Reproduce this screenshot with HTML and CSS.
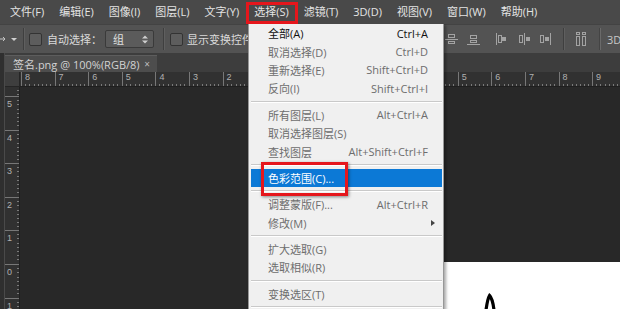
FILE: index.html
```html
<!DOCTYPE html>
<html>
<head>
<meta charset="utf-8">
<link rel="stylesheet" href="styles.css">
</head>
<body>
<div class="app">
  <div class="menubar">
    <span class="mi">文件(F)</span>
    <span class="mi">编辑(E)</span>
    <span class="mi">图像(I)</span>
    <span class="mi">图层(L)</span>
    <span class="mi">文字(Y)</span>
    <span class="mi active">选择(S)</span>
    <span class="mi">滤镜(T)</span>
    <span class="mi">3D(D)</span>
    <span class="mi">视图(V)</span>
    <span class="mi">窗口(W)</span>
    <span class="mi">帮助(H)</span>
  </div>

  <div class="toolbar">
    <div class="tb-left">
      <svg class="move" width="6" height="8" viewBox="0 0 6 8"><path d="M0 4H5M3 2L5 4L3 6" fill="none" stroke="#c4c4c4" stroke-width="1"/></svg>
      <span class="caret"></span>
      <span class="vsep"></span>
      <span class="cb"></span>
      <span class="lbl">自动选择：</span>
      <span class="select">组<svg class="updown" width="6" height="9" viewBox="0 0 6 9"><path d="M0 3.5L3 0.5L6 3.5ZM0 5.5L3 8.5L6 5.5Z" fill="#cfcfcf"/></svg></span>
      <span class="vsep sep2"></span>
      <span class="cb cb2"></span>
      <span class="lbl lbl2">显示变换控件</span>
    </div>
    <div class="tb-right">
      <svg class="ic i1" width="13" height="14" viewBox="0 0 13 14"><g fill="none" stroke="#a3a3a3"><rect x="3.5" y="2.5" width="6" height="3"/><path d="M0 7.5H13"/><rect x="3.5" y="9.5" width="6" height="2"/></g></svg>
      <svg class="ic i2" width="13" height="14" viewBox="0 0 13 14"><g fill="none" stroke="#a3a3a3"><rect x="3.5" y="3.5" width="6" height="3"/><rect x="3.5" y="8.5" width="6" height="2"/><path d="M0 12.5H13"/></g></svg>
      <svg class="ic i3" width="13" height="14" viewBox="0 0 13 14"><g fill="none" stroke="#a3a3a3"><path d="M1.5 1V13"/><rect x="3.5" y="3.5" width="3" height="7"/></g><rect x="7" y="5" width="4" height="4" fill="#a3a3a3"/></svg>
      <svg class="ic i4" width="13" height="14" viewBox="0 0 13 14"><g fill="none" stroke="#a3a3a3"><rect x="1.5" y="3.5" width="3" height="7"/><path d="M6.5 1V13"/></g><rect x="8" y="5" width="4" height="4" fill="#a3a3a3"/></svg>
      <svg class="ic i5" width="13" height="14" viewBox="0 0 13 14"><g fill="none" stroke="#a3a3a3"><rect x="1.5" y="3.5" width="3" height="7"/><path d="M11.5 1V13"/></g><rect x="6" y="5" width="4" height="4" fill="#a3a3a3"/></svg>
      <span class="vsep sep3"></span>
      <svg class="ic i6" width="14" height="14" viewBox="0 0 14 14"><g fill="none" stroke="#a3a3a3"><rect x="2.5" y="0.5" width="3" height="2"/><rect x="2.5" y="4.5" width="3" height="9"/><rect x="8.5" y="0.5" width="3" height="2"/><rect x="8.5" y="4.5" width="3" height="9"/></g></svg>
      <span class="vsep sep4"></span>
      <span class="lbl three">3D</span>
    </div>
  </div>

  <div class="main">
    <div class="strip"></div>
    <div class="doc">
      <div class="tabbar">
        <div class="tab"><span>签名.png @ 100%(RGB/8)</span><span class="close">×</span></div>
      </div>
      <div class="rulerrow">
        <div class="corner"></div>
        <div class="hruler">
          <span class="seg">8</span><span class="seg">7</span><span class="seg">6</span><span class="seg">5</span><span class="seg">4</span><span class="seg">3</span><span class="seg">2</span><span class="seg">1</span><span class="seg"></span><span class="seg"></span><span class="seg"></span><span class="seg"></span><span class="seg"></span><span class="seg">5</span><span class="seg">6</span><span class="seg">7</span><span class="seg">8</span><span class="seg">9</span>
        </div>
      </div>
      <div class="body">
        <div class="vruler">
          <span class="vseg first"></span>
          <span class="vseg">5</span><span class="vseg">4</span><span class="vseg">3</span><span class="vseg">2</span><span class="vseg">1</span><span class="vseg">0</span><span class="vseg">1</span>
        </div>
        <div class="canvas">
          <div class="image">
            <svg class="sig" width="60" height="50" viewBox="0 0 60 50"><path d="M43 48C44 41 45 36 46.5 33.5C48 35 50 40 51 48" fill="none" stroke="#000" stroke-width="3.2" stroke-linecap="round"/></svg>
          </div>
        </div>
      </div>
    </div>
  </div>

  <div class="dropdown">
    <div class="item strong"><span>全部(A)</span><span class="sc">Ctrl+A</span></div>
    <div class="item"><span>取消选择(D)</span><span class="sc">Ctrl+D</span></div>
    <div class="item"><span>重新选择(E)</span><span class="sc">Shift+Ctrl+D</span></div>
    <div class="item"><span>反向(I)</span><span class="sc">Shift+Ctrl+I</span></div>
    <div class="sep"></div>
    <div class="item"><span>所有图层(L)</span><span class="sc">Alt+Ctrl+A</span></div>
    <div class="item"><span>取消选择图层(S)</span></div>
    <div class="item"><span>查找图层</span><span class="sc">Alt+Shift+Ctrl+F</span></div>
    <div class="sep"></div>
    <div class="item hl"><span>色彩范围(C)...</span></div>
    <div class="sep"></div>
    <div class="item"><span>调整蒙版(F)...</span><span class="sc">Alt+Ctrl+R</span></div>
    <div class="item"><span>修改(M)</span><span class="arrow"></span></div>
    <div class="sep"></div>
    <div class="item"><span>扩大选取(G)</span></div>
    <div class="item"><span>选取相似(R)</span></div>
    <div class="sep"></div>
    <div class="item"><span>变换选区(T)</span></div>
    <div class="sep"></div>
  </div>
</div>
</body>
</html>
```

FILE: styles.css
```css
* { box-sizing: border-box; margin: 0; padding: 0; }
html, body { width: 620px; height: 309px; overflow: hidden; }
body {
  background: #282828;
  font-family: "Open Sans", "Noto Sans CJK SC", sans-serif;
  position: relative;
}
.app {
  position: relative;
  width: 620px;
  height: 309px;
  display: flex;
  flex-direction: column;
  overflow: hidden;
}

/* menu bar */
.menubar {
  position: relative;
  z-index: 3;
  height: 24px;
  flex: none;
  background: #494949;
  display: flex;
  align-items: center;
  gap: 15px;
  padding-left: 10px;
  font-size: 11px;
  color: #e4e4e4;
  white-space: nowrap;
}
.mi { position: relative; line-height: 24px; }
.mi.active::after {
  content: "";
  position: absolute;
  left: -8px;
  right: -9px;
  top: 2px;
  bottom: 0;
  border: 3px solid #e5161c;
}

/* options toolbar */
.toolbar {
  height: 29px;
  flex: none;
  background: #535353;
  border-top: 1px solid #434343;
  display: flex;
  align-items: center;
  font-size: 11px;
  color: #dadada;
  white-space: nowrap;
  overflow: hidden;
}
.tb-left { width: 440px; flex: none; display: flex; align-items: center; }
.tb-right { display: flex; align-items: center; }
.move { display: block; }
.caret {
  margin-left: 5px;
  width: 0; height: 0;
  border-left: 3px solid transparent;
  border-right: 3px solid transparent;
  border-top: 3px solid #d0d0d0;
}
.vsep {
  margin-left: 6px;
  width: 2px;
  height: 22px;
  border-left: 1px solid #3f3f3f;
  border-right: 1px solid #5f5f5f;
}
.cb {
  margin-left: 4px;
  width: 13px;
  height: 13px;
  border: 1px solid #333;
  border-radius: 2px;
  background: #5d5d5d;
}
.lbl { margin-left: 5px; }
.select {
  margin-left: 3px;
  width: 49px;
  height: 18px;
  display: flex;
  align-items: center;
  justify-content: space-between;
  padding: 0 5px 0 7px;
  border: 1px solid #3a3a3a;
  border-radius: 2px;
  background: #5b5b5b;
  color: #e0e0e0;
}
.updown { display: block; }
.sep2 { margin-left: 9px; }
.cb2 { margin-left: 5px; }
.lbl2 { margin-left: 4px; }

.ic { display: block; flex: none; }
.i1 { margin-left: 5px; }
.i2 { margin-left: 9px; }
.i3 { margin-left: 15px; }
.i4 { margin-left: 10px; }
.i5 { margin-left: 8px; }
.sep3 { margin-left: 11px; }
.i6 { margin-left: 9px; }
.sep4 { margin-left: 11px; border-left-color: #444; border-right-color: #6a6a6a; }
.three { margin-left: 6px; color: #c8c8c8; }

/* main area */
.main { flex: 1; display: flex; min-height: 0; }
.strip {
  width: 5px;
  flex: none;
  background: #2f2f2f;
  border-right: 1px solid #4a4a4a;
}
.doc { flex: 1; display: flex; flex-direction: column; min-width: 0; }
.tabbar {
  height: 19px;
  flex: none;
  background: #3d3d3d;
  padding-top: 2px;
  display: flex;
}
.tab {
  width: 152px;
  height: 17px;
  background: #4d4d4d;
  border-top: 1px solid #5d5d5d;
  display: flex;
  align-items: center;
  justify-content: space-between;
  padding: 0 7px 0 8px;
  font-size: 11px;
  color: #d2d2d2;
  white-space: nowrap;
}
.close { font-size: 10px; color: #bdbdbd; }

.rulerrow { height: 15px; flex: none; display: flex; }
.corner {
  width: 15px;
  flex: none;
  background: #3e3e3e;
  border-right: 1px solid #252525;
  border-bottom: 1px solid #252525;
}
.hruler {
  flex: 1;
  display: flex;
  overflow: hidden;
  padding-left: 1px;
  background: #313131;
  border-bottom: 1px solid #1f1f1f;
}
.seg {
  flex: none;
  width: 33.6px;
  height: 100%;
  border-left: 1px solid #777;
  padding-left: 3px;
  font-family: "Liberation Sans", sans-serif;
  font-size: 9px;
  line-height: 11px;
  color: #b0b0b0;
  background-image: repeating-linear-gradient(90deg, transparent 0 3.2px, #7a7a7a 3.2px 4.2px);
  background-size: 100% 2px;
  background-position: 0 100%;
  background-repeat: no-repeat;
}

.body { flex: 1; display: flex; min-height: 0; }
.vruler {
  width: 15px;
  flex: none;
  display: flex;
  flex-direction: column;
  overflow: hidden;
  background: #313131;
  border-right: 1px solid #1f1f1f;
}
.vseg {
  flex: none;
  height: 33.6px;
  border-top: 1px solid #777;
  padding: 2px 0 0 2px;
  font-family: "Liberation Sans", sans-serif;
  font-size: 9px;
  line-height: 10px;
  color: #b0b0b0;
  background-image: repeating-linear-gradient(180deg, transparent 0 3.2px, #7a7a7a 3.2px 4.2px);
  background-size: 2px 100%;
  background-position: 100% 0;
  background-repeat: no-repeat;
}
.vseg.first { height: 9px; border-top: none; }

.canvas { flex: 1; position: relative; background: #282828; }
.image {
  position: absolute;
  left: 423px;
  top: 175px;
  right: 0;
  bottom: 0;
  background: #fff;
}
.sig { display: block; }

/* dropdown menu */
.dropdown {
  position: absolute;
  z-index: 2;
  left: 248px;
  top: 23px;
  width: 196px;
  height: 290px;
  overflow: hidden;
  background: #f0f0f0;
  border: 1px solid #979797;
  border-bottom: none;
  box-shadow: 2px 2px 3px rgba(0, 0, 0, 0.35);
  padding: 0 1px 0 2px;
  font-size: 11px;
  color: #6d6d6d;
  white-space: nowrap;
}
.item {
  position: relative;
  height: 18.4px;
  display: flex;
  align-items: center;
  justify-content: space-between;
  padding: 0 14px 0 17px;
}
.item.strong { color: #111; }
.item.hl { background: #0c79d6; color: #fff; }
.item.hl::after {
  content: "";
  position: absolute;
  left: 10px;
  top: -7px;
  width: 81px;
  height: 28px;
  border: 3px solid #e5161c;
  box-shadow: 1px 1px 3px rgba(0, 0, 0, 0.45);
}
.sep {
  height: 8px;
  padding-top: 3px;
}
.sep::before {
  content: "";
  display: block;
  height: 1px;
  background: #c9c9c9;
  border-bottom: 1px solid #fff;
  box-sizing: content-box;
}
.arrow {
  width: 0; height: 0;
  margin-right: -7px;
  border-left: 4px solid #444;
  border-top: 3px solid transparent;
  border-bottom: 3px solid transparent;
}
```
